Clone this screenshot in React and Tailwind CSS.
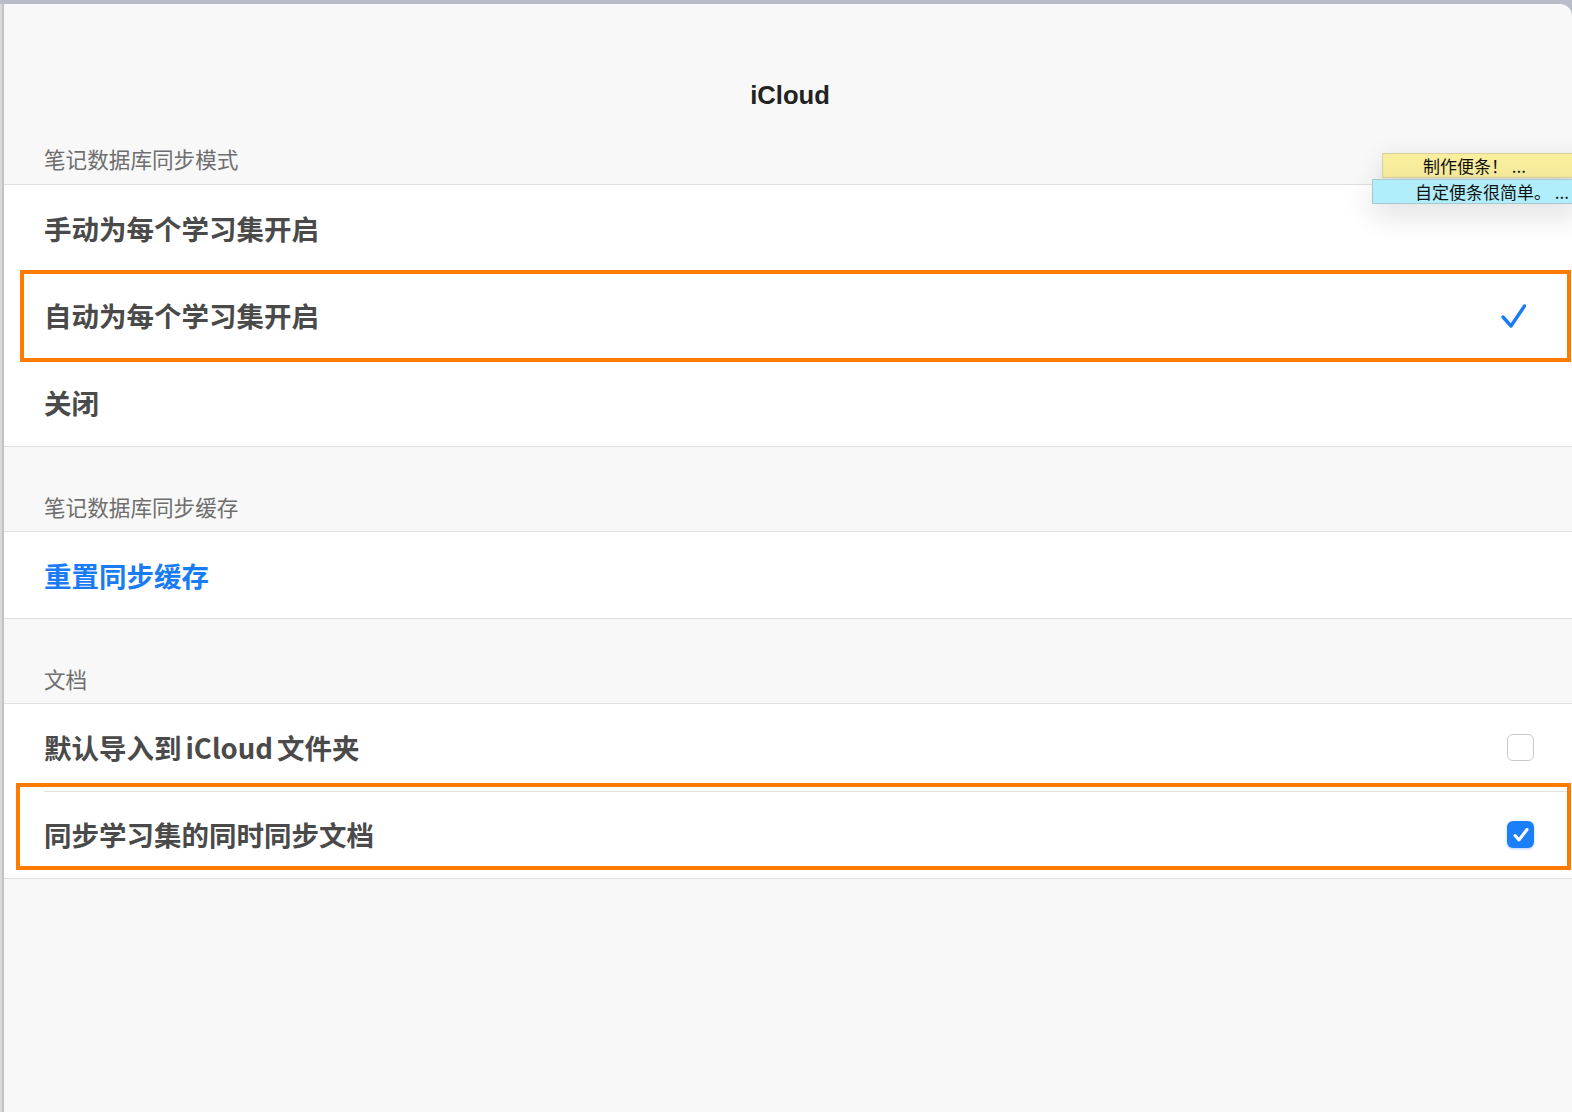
import React from "react";

const cjk = { fontFamily: '"Noto Sans CJK SC", "Noto Sans", sans-serif' };

function Header({ children }) {
  return (
    <div className="h-[84px] flex items-end pb-[12px] pl-[40px]">
      <span className="text-[21.6px] leading-[24px] text-[#6e6e6e]" style={cjk}>
        {children}
      </span>
    </div>
  );
}

function Row({ children, right, inset, blue, short }) {
  return (
    <div
      className={
        "relative bg-white flex items-center pl-[40px] pr-[38px] " +
        (short ? "h-[86px]" : "h-[87px]")
      }
    >
      {inset && <div className="absolute top-0 left-[40px] right-0 h-px bg-[#e2e2e2]" />}
      <span
        className={
          "flex-1 text-[27.5px] leading-[32px] font-bold -mt-[1px] " +
          (blue ? "text-[#1a7cf5]" : "text-[#4a4a4a]")
        }
        style={cjk}
      >
        {children}
      </span>
      {right}
    </div>
  );
}

function Divider() {
  return <div className="h-px bg-[#e0e0e0]" />;
}

function Check() {
  return (
    <svg width="28" height="26" viewBox="0 0 28 26" className="mr-[8px]">
      <polyline
        points="5,14 13,23 26.5,3"
        fill="none"
        stroke="#1a7cf5"
        strokeWidth="3.4"
        strokeLinecap="round"
        strokeLinejoin="round"
      />
    </svg>
  );
}

function Box({ checked }) {
  if (checked) {
    return (
      <div className="w-[27px] h-[27px] rounded-[6px] bg-[#1a7ff8] flex items-center justify-center shadow-[0_1px_3px_rgba(0,100,255,0.3)]">
        <svg width="18" height="16" viewBox="0 0 18 16">
          <polyline
            points="3,8.5 7,13 15,2.5"
            fill="none"
            stroke="white"
            strokeWidth="3"
            strokeLinecap="round"
            strokeLinejoin="round"
          />
        </svg>
      </div>
    );
  }
  return <div className="w-[27px] h-[27px] rounded-[6px] border border-[#c9c9c9] bg-white" />;
}

export default function App() {
  return (
    <div className="relative w-[1572px] h-[1112px] overflow-hidden bg-[#b9bdca]">
      <div className="flex h-full pt-[4px]">
        <div className="w-[2px] bg-[#dadada]" />
        <div className="w-[2px] bg-[#c2c2c2]" />
        <div className="flex-1 bg-[#f8f8f8] rounded-tr-[12px] flex flex-col">
          <div className="h-[126px] flex justify-center pt-[77px]">
            <span
              className="text-[25.6px] leading-[28px] font-bold text-[#222] ml-[4px]"
              style={{ fontFamily: '"Liberation Sans", Arial, sans-serif' }}
            >
              iCloud
            </span>
          </div>
          <div className="h-[54px] flex items-end pb-[13px] pl-[40px]">
            <span className="text-[21.6px] leading-[24px] text-[#6e6e6e]" style={cjk}>
              笔记数据库同步模式
            </span>
          </div>
          <Divider />
          <Row>手动为每个学习集开启</Row>
          <Row inset right={<Check />}>自动为每个学习集开启</Row>
          <Row inset>关闭</Row>
          <Divider />
          <Header>笔记数据库同步缓存</Header>
          <Divider />
          <Row short blue>重置同步缓存</Row>
          <Divider />
          <Header>文档</Header>
          <Divider />
          <Row right={<Box />}>
            默认导入到<span className="mx-[4px]">iCloud</span>文件夹
          </Row>
          <Row inset right={<Box checked />}>同步学习集的同时同步文档</Row>
          <Divider />
        </div>
      </div>

      {/* sticky notes */}
      <div className="absolute left-[1382px] top-[153px] w-[200px] h-[25px] bg-[#f9ee9e] border border-[#d8d0a0] shadow-[0_6px_24px_rgba(0,0,0,0.12)] flex items-center pl-[40px]">
        <span className="text-[17px] leading-[20px] text-[#111]" style={cjk}>
          制作便条！ ...
        </span>
      </div>
      <div className="absolute left-[1372px] top-[179px] w-[210px] h-[25px] bg-[#b0eefb] border border-[#a8c8d0] shadow-[0_10px_30px_rgba(0,0,0,0.14)] flex items-center pl-[42px]">
        <span className="text-[17px] leading-[20px] text-[#111]" style={cjk}>
          自定便条很简单。 ...
        </span>
      </div>

      {/* orange highlight boxes */}
      <div className="absolute left-[20px] top-[270px] w-[1551px] h-[92px] border-4 border-[#ff7a00]" />
      <div className="absolute left-[16px] top-[783px] w-[1555px] h-[87px] border-4 border-[#ff7a00]" />
    </div>
  );
}
